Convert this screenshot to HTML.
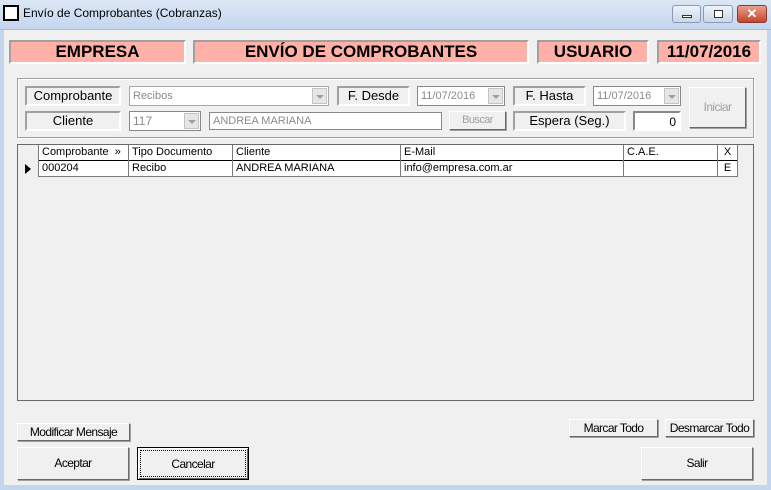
<!DOCTYPE html>
<html><head><style>
*{box-sizing:border-box;margin:0;padding:0}
body{width:771px;height:490px;overflow:hidden;background:#f0f0f0;font-family:"Liberation Sans",sans-serif;position:relative}
.a{position:absolute}
.title{left:0;top:0;width:771px;height:30px;background:linear-gradient(#dce7f5,#c4d6ee);border-bottom:1px solid #a9bcd6}
.frame{left:0;top:30px;width:771px;height:460px;border:4px solid #c4d6ee;border-top:none;border-bottom:5px solid #c4d6ee}
.hdr{height:24px;background:#ffb1a8;border:2px solid;border-color:#a0a0a0 #fff #fff #a0a0a0;font-weight:bold;font-size:17px;text-align:center;line-height:20px;color:#000}
.lbl{height:20px;background:#f0f0f0;border:2px solid;border-color:#a0a0a0 #fff #fff #a0a0a0;font-size:13px;text-align:center;line-height:16px}
.cb{height:20px;background:#fff;border:1px solid #a8a8a8;font-size:11px;color:#8a8a8a;padding-left:3px;line-height:18px}
.cb i{position:absolute;right:1px;top:1px;width:15px;height:16px;background:#e6e6e6;border:1px solid #c4c4c4}
.cb i:after{content:"";position:absolute;left:3px;top:6px;border:4px solid transparent;border-top:4px solid #a0a0a0}
.btn{background:#f0f0f0;border:1px solid;border-color:#fff #696969 #696969 #fff;box-shadow:1px 1px 0 #a0a0a0;font-size:12px;letter-spacing:-0.6px;white-space:nowrap;text-align:center;font-family:"Liberation Sans Narrow","Liberation Sans",sans-serif}
.grid{left:17px;top:144px;width:737px;height:257px;border:1px solid #696969;background:#f0f0f0}
.c{position:absolute;font-size:11px;border-right:1px solid #7a7a7a;height:16px;line-height:15px;padding-left:3px;white-space:nowrap}
</style></head><body>
<div class="a title"></div>
<div class="a" style="left:3px;top:5px;width:16px;height:16px;border:2px solid #000;background:#fff"></div>
<div class="a" style="left:23px;top:6px;font-size:12px">Envío de Comprobantes (Cobranzas)</div>
<div class="a" style="left:672px;top:5px;width:29px;height:18px;border:1px solid #8a9bb5;border-radius:3px;background:linear-gradient(#eef3fa,#c9d7ea)"><div class="a" style="left:9px;top:9px;width:10px;height:3px;border:1px solid #333;background:#fff"></div></div>
<div class="a" style="left:703px;top:5px;width:30px;height:18px;border:1px solid #8a9bb5;border-radius:3px;background:linear-gradient(#eef3fa,#c9d7ea)"><div class="a" style="left:10px;top:4px;width:9px;height:8px;border:1px solid #333;background:#fff"></div></div>
<div class="a" style="left:737px;top:5px;width:30px;height:18px;border:1px solid #8a3a2a;border-radius:3px;background:linear-gradient(#e9a08e,#c7452b);color:#fff;font-weight:bold;font-size:13px;text-align:center;line-height:16px">✕</div>
<div class="a frame"></div>

<div class="a hdr" style="left:9px;top:40px;width:177px">EMPRESA</div>
<div class="a hdr" style="left:193px;top:40px;width:336px">ENVÍO DE COMPROBANTES</div>
<div class="a hdr" style="left:537px;top:40px;width:112px">USUARIO</div>
<div class="a hdr" style="left:657px;top:40px;width:104px">11/07/2016</div>

<div class="a" style="left:17px;top:78px;width:737px;height:60px;border:1px solid #a0a0a0;box-shadow:inset 1px 1px 0 #fff,1px 1px 0 #fff"></div>
<div class="a lbl" style="left:25px;top:86px;width:96px">Comprobante</div>
<div class="a cb" style="left:129px;top:86px;width:200px">Recibos<i></i></div>
<div class="a lbl" style="left:337px;top:86px;width:73px">F. Desde</div>
<div class="a cb" style="left:417px;top:86px;width:88px;border-color:#888">11/07/2016<i></i></div>
<div class="a lbl" style="left:513px;top:86px;width:73px">F. Hasta</div>
<div class="a cb" style="left:593px;top:86px;width:88px;border-color:#888">11/07/2016<i></i></div>
<div class="a btn" style="left:689px;top:87px;width:57px;height:41px;line-height:39px;color:#a0a0a0">Iniciar</div>
<div class="a lbl" style="left:25px;top:111px;width:96px">Cliente</div>
<div class="a cb" style="left:129px;top:111px;width:72px;border-color:#888;font-size:12px">117<i></i></div>
<div class="a cb" style="left:209px;top:112px;width:233px;height:18px;line-height:16px;border-color:#888">ANDREA MARIANA</div>
<div class="a btn" style="left:449px;top:111px;width:57px;height:19px;line-height:17px;color:#a0a0a0;font-size:11px">Buscar</div>
<div class="a lbl" style="left:513px;top:111px;width:113px">Espera (Seg.)</div>
<div class="a cb" style="left:633px;top:111px;width:48px;border:2px solid;border-color:#888 #fff #fff #888;color:#000;text-align:right;padding-right:3px;font-size:12px">0</div>

<div class="a grid">
<div class="a" style="left:0;top:0;width:720px;height:32px;background:#fff"></div>
<div class="a" style="left:0;top:15px;width:720px;border-top:1px solid #000"></div>
<div class="a" style="left:0;top:31px;width:720px;border-top:1px solid #7a7a7a"></div>
<div class="c" style="left:0;top:0;width:21px;background:#f0f0f0"></div>
<div class="c" style="left:0;top:16px;width:21px;background:#f0f0f0"><span style="position:absolute;left:7px;top:3px;border:5px solid transparent;border-left:6px solid #000;border-right:none"></span></div>
<div class="c" style="left:21px;top:0;width:90px">Comprobante &nbsp;»</div>
<div class="c" style="left:111px;top:0;width:104px">Tipo Documento</div>
<div class="c" style="left:215px;top:0;width:168px">Cliente</div>
<div class="c" style="left:383px;top:0;width:223px">E-Mail</div>
<div class="c" style="left:606px;top:0;width:94px">C.A.E.</div>
<div class="c" style="left:700px;top:0;width:20px;text-align:center;padding:0">X</div>
<div class="c" style="left:21px;top:16px;width:90px">000204</div>
<div class="c" style="left:111px;top:16px;width:104px">Recibo</div>
<div class="c" style="left:215px;top:16px;width:168px">ANDREA MARIANA</div>
<div class="c" style="left:383px;top:16px;width:223px">info@empresa.com.ar</div>
<div class="c" style="left:606px;top:16px;width:94px"></div>
<div class="c" style="left:700px;top:16px;width:20px;text-align:center;padding:0">E</div>
</div>

<div class="a btn" style="left:17px;top:423px;width:113px;height:18px;line-height:16px">Modificar Mensaje</div>
<div class="a btn" style="left:569px;top:419px;width:89px;height:18px;line-height:16px">Marcar Todo</div>
<div class="a btn" style="left:665px;top:419px;width:89px;height:18px;line-height:16px">Desmarcar Todo</div>
<div class="a btn" style="left:17px;top:447px;width:112px;height:33px;line-height:31px">Aceptar</div>
<div class="a btn" style="left:137px;top:447px;width:112px;height:33px;line-height:27px;border:1px solid #000;box-shadow:inset 1px 1px 0 #fff,inset -1px -1px 0 #696969"><div style="margin:2px;border:1px dotted #000;height:27px">Cancelar</div></div>
<div class="a btn" style="left:641px;top:447px;width:112px;height:33px;line-height:31px">Salir</div>
</body></html>
